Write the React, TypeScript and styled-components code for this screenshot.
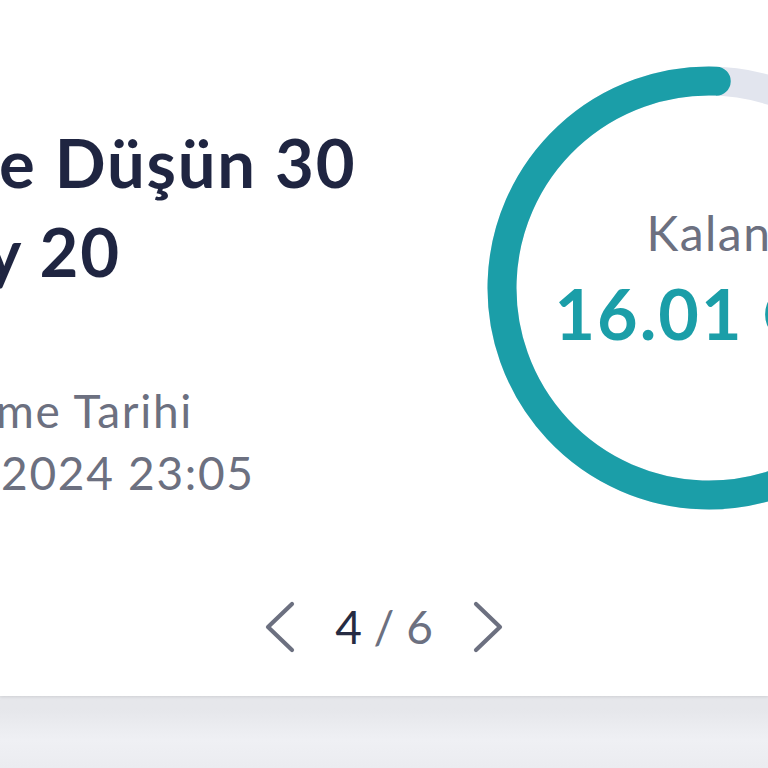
import React from 'react'
import styled, { createGlobalStyle } from 'styled-components'

const GlobalStyle = createGlobalStyle`
  html, body {
    margin: 0;
    padding: 0;
  }
  body {
    font-family: Lato, "Noto Sans", "Liberation Sans", sans-serif;
    background: #ebecf0;
  }
`

/* 样式 */
const Page = styled.div`
  width: 768px;
  height: 768px;
  overflow: hidden;
  background: linear-gradient(180deg, #e2e3e8 0px, #e6e7eb 710px, #eff0f4 740px, #ebecf0 768px);
`

const Card = styled.div`
  width: 768px;
  overflow: hidden;
  background: #ffffff;
  padding-bottom: 42px;
  box-shadow: 0 1px 3px rgba(0, 0, 0, 0.1);
`

const Content = styled.div`
  display: flex;
  align-items: flex-start;
`

const InfoColumn = styled.div`
  flex: 0 0 487px;
  display: flex;
  flex-direction: column;
  padding-top: 118px;
  white-space: nowrap;
`

const Title = styled.div`
  font-size: 67px;
  line-height: 89px;
  font-weight: 700;
  color: #1f2541;
  letter-spacing: 1.8px;
`

const Line = styled.div<{ $indent: number }>`
  margin-left: ${p => p.$indent}px;
`

const DateBlock = styled.div`
  margin-top: 84px;
  font-size: 46px;
  line-height: 62px;
  font-weight: 400;
  color: #6c7080;
  letter-spacing: 1.7px;
`

const RingBox = styled.div`
  flex: 0 0 444px;
  margin-top: 66px;
  display: grid;
  width: 444px;
  height: 444px;

  & > * {
    grid-area: 1 / 1;
  }
`

const RingCenter = styled.div`
  display: flex;
  flex-direction: column;
  align-items: center;
  padding-top: 138px;
  white-space: nowrap;
`

const RingLabel = styled.div`
  font-size: 48px;
  line-height: 58px;
  color: #6c7080;
  letter-spacing: 1.5px;
`

const RingValue = styled.div`
  margin-top: 7px;
  font-size: 70px;
  line-height: 88px;
  font-weight: 700;
  color: #1b9ea8;
  letter-spacing: 2px;
`

const Pager = styled.div`
  margin-top: 90px;
  display: flex;
  align-items: center;
  justify-content: center;
  gap: 40px;
  height: 54px;
`

const PagerText = styled.div`
  font-size: 46px;
  line-height: 54px;
  color: #6c7080;
  white-space: pre;
`

const Current = styled.span`
  color: #262b42;
`

const ChevronButton = styled.button`
  border: 0;
  padding: 0;
  background: none;
  display: flex;
  cursor: pointer;
`

const Chevron: React.FC<{ dir: 'left' | 'right' }> = ({ dir }) => (
  <svg width="30" height="52" viewBox="0 0 30 52" fill="none">
    <path
      d={dir === 'left' ? 'M27 3 L3 26 L27 49' : 'M3 3 L27 26 L3 49'}
      stroke="#6c7080"
      strokeWidth="4.2"
      strokeLinecap="round"
      strokeLinejoin="round"
    />
  </svg>
)

const Ring: React.FC<{ percent: number }> = ({ percent }) => {
  const r = 207
  const c = 2 * Math.PI * r
  const used = c * percent
  return (
    <svg width="444" height="444" viewBox="0 0 444 444">
      <circle cx="222" cy="222" r={r} fill="none" stroke="#e2e5ee" strokeWidth="29" />
      {/* 进度从顶部逆时针绘制 */}
      <circle
        cx="222"
        cy="222"
        r={r}
        fill="none"
        stroke="#1b9ea8"
        strokeWidth="29"
        strokeLinecap="round"
        strokeDasharray={`${used} ${c}`}
        transform="rotate(-88 222 222) scale(1 -1) translate(0 -444)"
      />
    </svg>
  )
}

const App: React.FC = () => {
  return (
    <Page>
      <GlobalStyle />
      <Card>
        <Content>
          <InfoColumn>
            <Title>
              <Line $indent={-1}>e Düşün 30</Line>
              <Line $indent={-14}>y 20</Line>
            </Title>
            <DateBlock>
              <Line $indent={-4}>me Tarihi</Line>
              <Line $indent={1}>2024 23:05</Line>
            </DateBlock>
          </InfoColumn>
          <RingBox>
            <Ring percent={0.72} />
            <RingCenter>
              <RingLabel>Kalan</RingLabel>
              <RingValue>16.01 GB</RingValue>
            </RingCenter>
          </RingBox>
        </Content>
        <Pager>
          <ChevronButton aria-label="Önceki">
            <Chevron dir="left" />
          </ChevronButton>
          <PagerText>
            <Current>4</Current> / 6
          </PagerText>
          <ChevronButton aria-label="Sonraki">
            <Chevron dir="right" />
          </ChevronButton>
        </Pager>
      </Card>
    </Page>
  )
}

export default App
